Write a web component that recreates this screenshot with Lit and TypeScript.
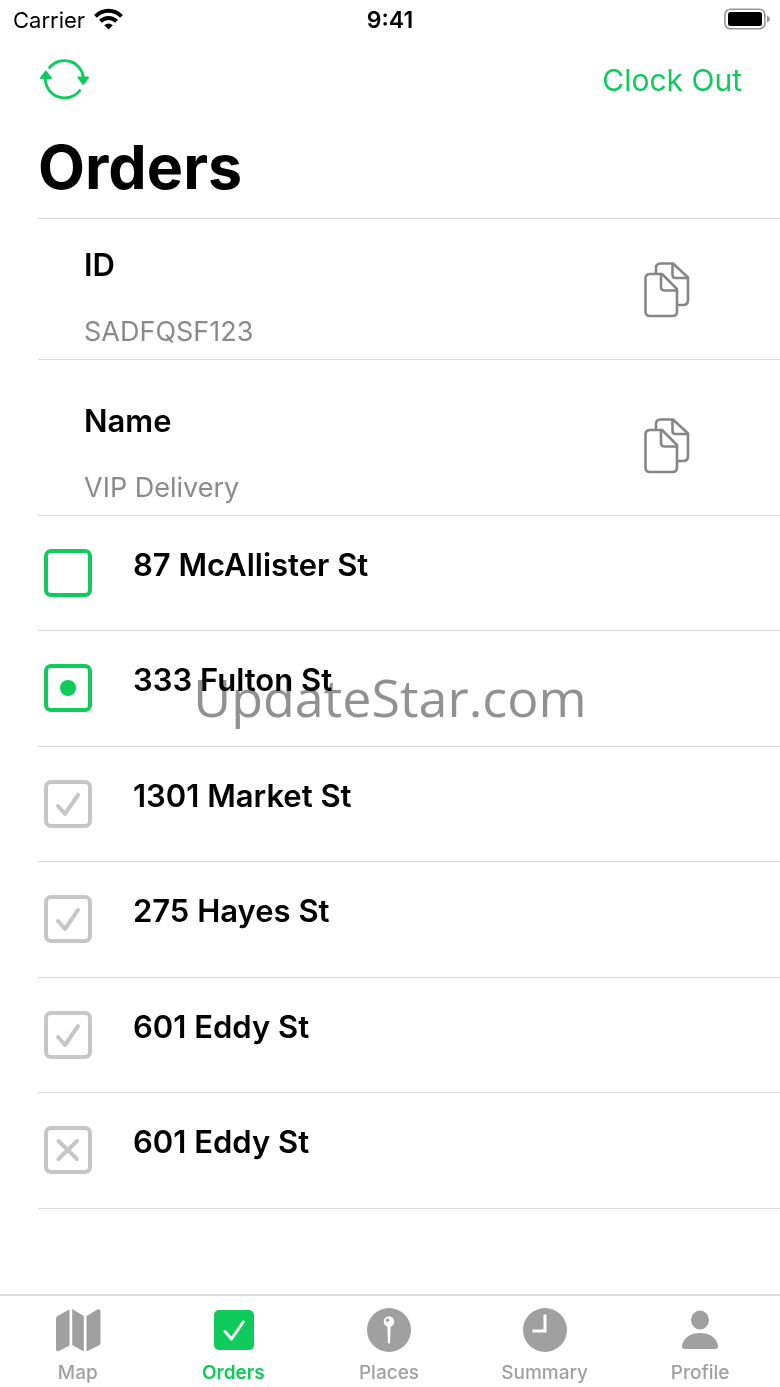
import { LitElement, html, css, svg } from "lit";
import { customElement } from "lit/decorators.js";

type OrderState = "open" | "current" | "done" | "cancelled";

interface Order {
  address: string;
  state: OrderState;
}

const details = [
  { label: "ID", value: "SADFQSF123" },
  { label: "Name", value: "VIP Delivery" },
];

const orders: Order[] = [
  { address: "87 McAllister St", state: "open" },
  { address: "333 Fulton St", state: "current" },
  { address: "1301 Market St", state: "done" },
  { address: "275 Hayes St", state: "done" },
  { address: "601 Eddy St", state: "done" },
  { address: "601 Eddy St", state: "cancelled" },
];

const marks = {
  open: svg``,
  current: svg`<circle cx="24" cy="24" r="8" fill="currentColor" stroke="none"/>`,
  done: svg`<path d="M14 26 L21 34 L34 15" stroke-width="4"/>`,
  cancelled: svg`<path d="M14.500 15 L33 33 M33 15 L14.500 33" stroke-width="4"/>`,
};

const tabs = [
  {
    name: "Map",
    icon: svg`<path fill="currentColor" d="M1 10.500 Q1 9 2.300 8.200 L14.500 1.200 V37.500 L4 43 Q1 44 1 41 Z M17.200 1 L28.800 8 V43.500 L17.200 37 Z M31.500 8 L42.500 1.500 Q45.500 0.600 45.500 3.500 V35 Q45.500 36.500 44.200 37.200 L31.500 43.500 Z"/>`,
  },
  {
    name: "Orders",
    icon: svg`<rect x="4" y="2" width="40" height="40" rx="5" fill="currentColor"/><path d="M15 23.500 L21.500 31 L33.200 14" fill="none" stroke="#fff" stroke-width="3" stroke-linecap="round" stroke-linejoin="round"/>`,
  },
  {
    name: "Places",
    icon: svg`<circle cx="23" cy="22" r="22" fill="currentColor"/><circle cx="23" cy="13.500" r="5.300" fill="#fff"/><circle cx="21.500" cy="12.300" r="1.700" fill="currentColor"/><path d="M21.400 18 H24.600 L24.100 35 Q23 36.500 21.900 35 Z" fill="#fff"/>`,
  },
  {
    name: "Summary",
    icon: svg`<circle cx="23" cy="22" r="22" fill="currentColor"/><path d="M23 6.500 V23 H10.500" fill="none" stroke="#fff" stroke-width="3"/>`,
  },
  {
    name: "Profile",
    icon: svg`<ellipse cx="23" cy="12" rx="9" ry="9.500" fill="currentColor"/><path d="M5 37 C7 29 14 25 23 25 C32 25 39 29 41 37 Q41.500 41 38 41 H8 Q4.500 41 5 37 Z" fill="currentColor"/>`,
  },
];

@customElement("app-root")
export class AppRoot extends LitElement {
  static styles = css`
    :host {
      display: flex;
      flex-direction: column;
      position: relative;
      min-height: 100vh;
      background: #fff;
      color: #000;
      font-family: Inter, "Liberation Sans", sans-serif;
      --green: #0fcb5c;
      --line: #d9d9da;
      --muted: #8a8a8c;
    }
    * {
      box-sizing: border-box;
    }
    button {
      border: 0;
      padding: 0;
      background: none;
      font: inherit;
      color: inherit;
      cursor: pointer;
    }
    svg {
      display: block;
    }
    .status {
      display: grid;
      grid-template-columns: 1fr auto 1fr;
      align-items: center;
      height: 40px;
      padding: 0 10px;
      font-size: 22px;
      line-height: 28px;
    }
    .carrier {
      display: flex;
      align-items: center;
      gap: 9px;
      padding-left: 3px;
    }
    .time {
      font-size: 23px;
      font-weight: 600;
    }
    .battery {
      justify-self: end;
    }
    .bar {
      display: flex;
      align-items: center;
      justify-content: space-between;
      height: 80px;
      padding: 0 38px 0 40px;
    }
    .clock-out {
      color: var(--green);
      font-size: 30px;
      line-height: 40px;
    }
    .sync {
      color: var(--green);
    }
    h1 {
      margin: 0;
      padding: 7px 38px 11px;
      font-size: 61px;
      line-height: 80px;
      font-weight: 700;
    }
    .list {
      margin: 0 0 0 38px;
      padding: 0;
      list-style: none;
    }
    .details {
      border-top: 1px solid var(--line);
    }
    .detail {
      display: flex;
      align-items: center;
      justify-content: space-between;
      padding: 24px 90px 7px 46px;
      border-bottom: 1px solid var(--line);
    }
    .detail + .detail {
      padding-top: 39px;
    }
    dl {
      display: grid;
      gap: 25px;
      margin: 0;
    }
    dt {
      font-size: 31px;
      line-height: 44px;
      font-weight: 600;
    }
    dd {
      margin: 0;
      font-size: 27px;
      line-height: 40px;
      color: var(--muted);
    }
    .copy {
      margin-bottom: 16px;
      color: #868688;
    }
    .order {
      height: 115px;
      border-bottom: 1px solid var(--line);
    }
    .order:nth-child(even) {
      height: 116px;
    }
    .order label {
      display: flex;
      gap: 41px;
      padding-left: 6px;
    }
    .address {
      padding-top: 28px;
      font-size: 31px;
      line-height: 42px;
      font-weight: 600;
    }
    .box {
      display: grid;
      padding-top: 33px;
      color: #c6c6c8;
    }
    .box > * {
      grid-area: 1 / 1;
    }
    .box.open,
    .box.current {
      color: var(--green);
    }
    .box input {
      appearance: none;
      width: 48px;
      height: 48px;
      margin: 0;
      color: inherit;
      border: 4px solid currentColor;
      border-radius: 7px;
    }
    .box svg {
      pointer-events: none;
      fill: none;
      stroke: currentColor;
      stroke-linecap: round;
      stroke-linejoin: round;
    }
    .tabs {
      display: grid;
      grid-template-columns: repeat(5, 1fr);
      margin-top: auto;
      height: 93px;
      padding: 12px 2px 0 0;
      border-top: 2px solid #dededf;
    }
    .tab {
      display: flex;
      flex-direction: column;
      align-items: center;
      gap: 9px;
      font-size: 19px;
      line-height: 24px;
      font-weight: 500;
      color: #a0a0a0;
    }
    .tab.active {
      color: var(--green);
      font-weight: 600;
    }
    .watermark {
      position: absolute;
      top: 662px;
      left: 0;
      right: 0;
      text-align: center;
      font-family: "Open Sans", "Noto Sans", sans-serif;
      font-size: 52px;
      line-height: 70px;
      color: #919191;
      mix-blend-mode: multiply;
      pointer-events: none;
    }
  `;

  render() {
    return html`
      <div class="status">
        <div class="carrier">
          <span>Carrier</span>
          <svg width="29" height="24" viewBox="0 0 29 24" fill="none" stroke="#000" stroke-width="4" aria-label="Wi-Fi">
            <path d="M1.500 8.300 C9 0.800 20 0.800 27.500 8.300" />
            <path d="M6.500 13.300 C11 8.900 18 8.900 22.500 13.300" />
            <path d="M14.500 21.500 L10.200 17.300 Q14.500 13.600 18.800 17.300 Z" fill="#000" stroke="none" />
          </svg>
        </div>
        <span class="time">9:41</span>
        <svg class="battery" width="46" height="24" viewBox="0 0 46 24" aria-label="Battery full">
          <rect x="0.900" y="1.200" width="40" height="19.500" rx="5.500" fill="none" stroke="#969696" stroke-width="1.600" />
          <rect x="4" y="4" width="34" height="14" rx="2.500" fill="#000" />
          <path d="M43 7.500 Q46 9 46 11 Q46 13 43 14.500 Z" fill="#969696" />
        </svg>
      </div>
      <header class="bar">
        <button class="sync" aria-label="Sync">
          <svg width="50" height="44" viewBox="0 0 50 44" fill="none" stroke="currentColor" stroke-width="2.800">
            <path d="M9.500 9.500 A19.300 19.300 0 0 1 43.500 20" stroke-linecap="round" />
            <path d="M39.800 32.500 A19.300 19.300 0 0 1 5.300 21" stroke-linecap="round" />
            <path d="M38.500 19.500 H48 L43.200 26 Z M1 20 H10.800 L5.800 13.500 Z" fill="currentColor" stroke-width="2" stroke-linejoin="round" />
          </svg>
        </button>
        <button class="clock-out">Clock Out</button>
      </header>
      <h1>Orders</h1>
      <main>
        <ul class="list details">
          ${details.map(
            (d) => html`<li class="detail">
              <dl>
                <dt>${d.label}</dt>
                <dd>${d.value}</dd>
              </dl>
              <button class="copy" aria-label="Copy ${d.label}">
                <svg width="46" height="56" viewBox="0 0 46 56" fill="none" stroke="currentColor" stroke-width="2.600" stroke-linejoin="round" stroke-linecap="round">
                  <path d="M12 11.500 V6 Q12 1.500 16.500 1.500 H29 L44 15.500 V38 Q44 43 39 43 H34" />
                  <path d="M28.500 2 V13 Q28.500 16 31.500 16 H43.500" />
                  <path d="M6 12 H18 L33 27 V49.500 Q33 54 28.500 54 H6 Q1.500 54 1.500 49.500 V16.500 Q1.500 12 6 12 Z" />
                  <path d="M17 12.500 V25 Q17 28.500 20.500 28.500 H32.500" />
                </svg>
              </button>
            </li>`
          )}
        </ul>
        <ul class="list">
          ${orders.map(
            (o, i) => html`<li class="order">
              <label for="order-${i}">
                <span class="box ${o.state}">
                  <input type="checkbox" id="order-${i}" .checked=${o.state === "done"} />
                  <svg width="48" height="48" viewBox="0 0 48 48">${marks[o.state]}</svg>
                </span>
                <span class="address">${o.address}</span>
              </label>
            </li>`
          )}
        </ul>
      </main>
      <nav class="tabs">
        ${tabs.map(
          (t) => html`<button class="tab ${t.name === "Orders" ? "active" : ""}">
            <svg width="46" height="44" viewBox="0 0 46 44">${t.icon}</svg>
            <span>${t.name}</span>
          </button>`
        )}
      </nav>
      <div class="watermark">UpdateStar.com</div>
    `;
  }
}
